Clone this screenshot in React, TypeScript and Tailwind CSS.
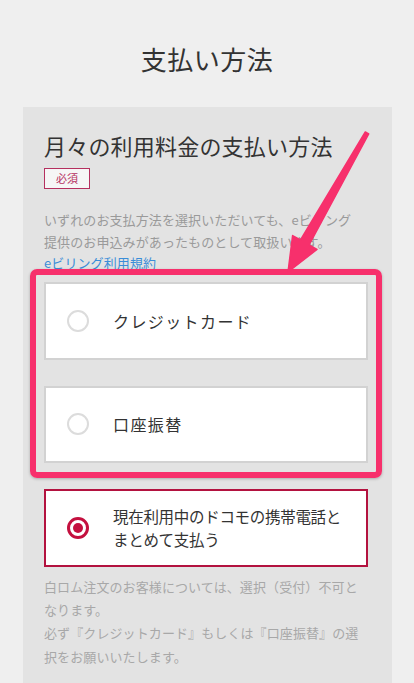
import { useState } from 'react';

const font = { fontFamily: '"Noto Sans CJK JP", "Noto Sans", sans-serif' };

type OptionProps = {
    label: string;
    selected: boolean;
    onSelect: () => void;
    className?: string;
};

function PayOption({ label, selected, onSelect, className = '' }: OptionProps) {
    return (
        <button
            onClick={onSelect}
            className={`flex w-full items-center bg-white text-left ${selected ? 'border-2 border-[#b3123f]' : 'border-2 border-[#d2d2d2]'} ${className}`}
        >
            <span className="ml-[21px] flex h-[22px] w-[22px] shrink-0 items-center justify-center">
                {selected ? (
                    <span className="flex h-[22px] w-[22px] items-center justify-center rounded-full border-[3px] border-[#c4103f]">
                        <span className="h-[10px] w-[10px] rounded-full bg-[#c4103f]" />
                    </span>
                ) : (
                    <span className="h-[22px] w-[22px] rounded-full border-2 border-[#dcdcdc]" />
                )}
            </span>
            <span
                className={`ml-[24px] pr-4 text-[#333] ${selected ? 'text-[15.5px] leading-[23px] tracking-[-0.3px]' : 'text-[16px] tracking-[1.4px]'}`}
            >
                {label}
            </span>
        </button>
    );
}

export default function App() {
    const [method, setMethod] = useState('docomo');

    return (
        <div className="relative min-h-[683px] w-[414px] overflow-hidden bg-[#efefef]" style={font}>
            <h1 className="pt-[41px] pb-[31px] text-center text-[26px] leading-[35px] text-[#333] tracking-[0.5px]">支払い方法</h1>

            <div className="ml-[23px] mr-[22px] bg-[#e3e3e3] pl-[21px] pr-[24px] pt-[24px] pb-[40px]">
                <h2 className="text-[22px] leading-[28px] text-[#333] tracking-[0.2px]">月々の利用料金の支払い方法</h2>
                <div className="mt-[9px] flex h-[21px] w-[46px] items-center justify-center border border-[#b5305f] bg-[#f6f6f6] text-[11px] text-[#b5305f]">必須</div>

                <p className="mt-[20px] text-[13px] leading-[21.5px] tracking-[0.1px] text-[#9a9a9a]">
                    いずれのお支払方法を選択いただいても、eビリング
                    <br />
                    提供のお申込みがあったものとして取扱います。
                    <br />
                    <a className="text-[#3b8ed8]">eビリング利用規約</a>
                </p>

                <div className="mt-[8px] flex flex-col">
                    <PayOption label="クレジットカード" selected={method === 'card'} onSelect={() => setMethod('card')} className="h-[78px]" />
                    <PayOption label="口座振替" selected={method === 'bank'} onSelect={() => setMethod('bank')} className="mt-[26px] h-[77px]" />
                    <PayOption label={'現在利用中のドコモの携帯電話と\nまとめて支払う'} selected={method === 'docomo'} onSelect={() => setMethod('docomo')} className="mt-[26px] h-[78px] whitespace-pre-line" />
                </div>

                <p className="mt-[8px] text-[13px] leading-[23.4px] tracking-[0.1px] text-[#a8a8a8]">
                    白ロム注文のお客様については、選択（受付）不可と
                    <br />
                    なります。
                    <br />
                    必ず『クレジットカード』もしくは『口座振替』の選
                    <br />
                    択をお願いいたします。
                </p>
            </div>

            {/* 注釈: ピンクの枠と矢印 */}
            <div className="pointer-events-none absolute left-[30px] top-[269px] h-[209px] w-[352px] rounded-[7px] border-[6px] border-[#f7306c] shadow-[0_1px_3px_rgba(0,0,0,0.25)]" />
            <svg className="pointer-events-none absolute left-0 top-0" width="414" height="683" viewBox="0 0 414 683">
                <polygon
                    points="365.3,132 368.7,134 309.1,245 317,249.4 288,272 292.6,235.6 300.5,240"
                    fill="#f7306c"
                    stroke="#f7306c"
                    strokeWidth="1.5"
                    strokeLinejoin="round"
                />
            </svg>
        </div>
    );
}
